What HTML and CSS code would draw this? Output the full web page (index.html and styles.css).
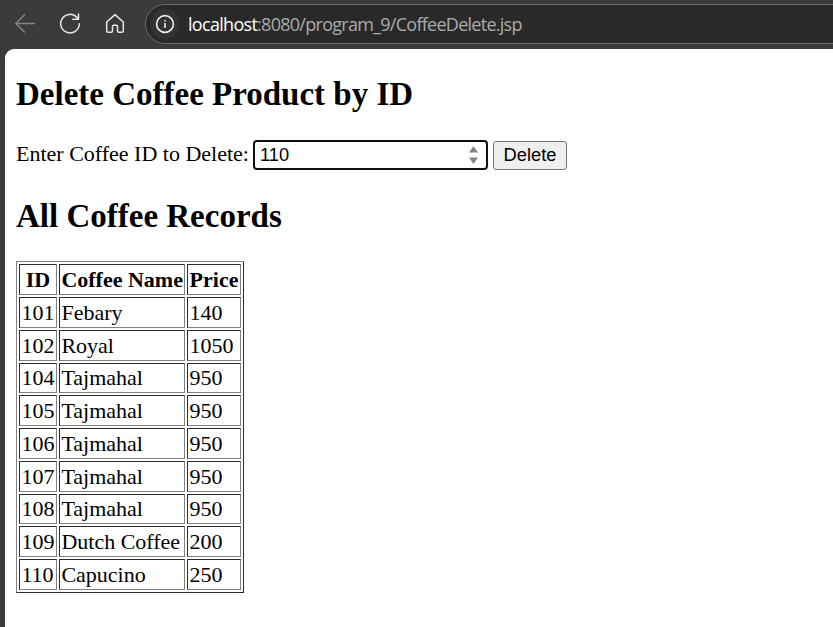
FILE: index.html
```
<!DOCTYPE html>
<html lang="en">
<head>
<meta charset="utf-8">
<title>Delete Coffee Product</title>
<link rel="stylesheet" href="styles.css">
</head>
<body>
<header class="toolbar">
  <svg class="nav-icon back" width="22" height="22" viewBox="0 0 22 22"><path d="M20.5 11.5H1.8M10.5 2.8 1.8 11.5l8.7 8.5"/></svg>
  <svg class="nav-icon reload" width="22" height="22" viewBox="0 0 22 22"><path d="M20.3 11.7A9.3 9.3 0 1 1 17.8 5.3L19.3 7.1M19.5 2.1V7.3H13.8"/></svg>
  <svg class="nav-icon home" width="20" height="22" viewBox="0 0 20 22"><path d="M1.7 10 10 2.6l8.3 7.4v8.9a1.3 1.3 0 0 1-1.3 1.3h-3.2a1.3 1.3 0 0 1-1.3-1.3v-4.4a1.3 1.3 0 0 0-1.3-1.3H8.8a1.3 1.3 0 0 0-1.3 1.3v4.4a1.3 1.3 0 0 1-1.3 1.3H3a1.3 1.3 0 0 1-1.3-1.3z"/></svg>
  <div class="address">
    <span class="site-info"><svg width="20" height="20" viewBox="0 0 20 20"><circle cx="10" cy="10" r="8.4"/><path d="M10 9v5M10 6v1.6"/></svg></span>
    <span class="url"><span class="host">localhost</span><span class="path">:8080/program_9/CoffeeDelete.jsp</span></span>
  </div>
</header>
<main class="page">
  <h2>Delete Coffee Product by ID</h2>
  <form class="delete-form">
    <label for="coffee-id">Enter Coffee ID to Delete:</label>
    <span class="number-field">
      <input id="coffee-id" type="text" inputmode="numeric" value="110">
      <svg class="spinner" width="9" height="18" viewBox="0 0 9 18"><path d="M4.5 0 9 6.5H0zM4.5 18 9 11.5H0z"/></svg>
    </span>
    <button type="button">Delete</button>
  </form>
  <h2>All Coffee Records</h2>
  <table>
    <tr><th>ID</th><th>Coffee Name</th><th>Price</th></tr>
    <tr><td>101</td><td>Febary</td><td>140</td></tr>
    <tr><td>102</td><td>Royal</td><td>1050</td></tr>
    <tr class="tight"><td>104</td><td>Tajmahal</td><td>950</td></tr>
    <tr><td>105</td><td>Tajmahal</td><td>950</td></tr>
    <tr><td>106</td><td>Tajmahal</td><td>950</td></tr>
    <tr><td>107</td><td>Tajmahal</td><td>950</td></tr>
    <tr class="tight"><td>108</td><td>Tajmahal</td><td>950</td></tr>
    <tr><td>109</td><td>Dutch Coffee</td><td>200</td></tr>
    <tr><td>110</td><td>Capucino</td><td>250</td></tr>
  </table>
</main>
</body>
</html>
```
FILE: styles.css
```
* { box-sizing: border-box; }
body {
  margin: 0;
  height: 627px;
  overflow: hidden;
  background: #3b3b3b;
  display: flex;
  flex-direction: column;
}
.toolbar {
  height: 49px;
  flex: none;
  display: flex;
  align-items: flex-start;
  padding: 4px 0 0 14px;
}
.nav-icon {
  flex: none;
  margin-top: 8px;
  fill: none;
  stroke: #e6e6e6;
  stroke-width: 1.5;
  stroke-linecap: round;
  stroke-linejoin: round;
}
.back { stroke: #858585; }
.reload { margin-left: 23px; }
.home { margin-left: 24px; }
.address {
  flex: 1;
  height: 40px;
  margin: 0 -40px 0 20px;
  border: 1px solid #6b6b6b;
  border-radius: 20px;
  background: #292929;
  display: flex;
  align-items: center;
  padding-left: 4px;
}
.site-info {
  width: 30px;
  height: 30px;
  border-radius: 50%;
  background: #333;
  display: flex;
  align-items: center;
  justify-content: center;
}
.site-info svg { fill: none; stroke: #ededed; stroke-width: 1.6; }
.url {
  margin-left: 8px;
  font: 18px "Open Sans", sans-serif;
  white-space: nowrap;
}
.host { color: #fff; letter-spacing: -0.7px; }
.path { color: #ababab; letter-spacing: -0.73px; }
.page {
  flex: 1;
  margin-left: 5px;
  padding: 0 11px;
  background: #fff;
  border-top-left-radius: 9px;
  color: #000;
  font: 22px/30px "Liberation Serif", serif;
}
h2 {
  margin: 0;
  font-size: 33px;
  line-height: 38px;
}
.page h2:first-child { padding-top: 26px; height: 64px; }
.delete-form {
  display: flex;
  height: 30px;
  margin: 27px 0;
}
.delete-form label { width: 237px; white-space: nowrap; line-height: 28px; }
.number-field {
  width: 235px;
  height: 30px;
  border: 2.5px solid #101010;
  border-radius: 4px;
  display: flex;
  align-items: center;
  padding: 0 8px 0 5px;
}
.number-field input {
  flex: 1;
  min-width: 0;
  height: 24px;
  border: 0;
  padding: 0 0 1px;
  outline: 0;
  font: 18.3px "Liberation Sans", sans-serif;
}
.spinner { fill: #858585; }
button {
  width: 74px;
  height: 29px;
  margin: 1px 0 0 5px;
  padding: 0 0 2px;
  border: 1px solid #767676;
  border-radius: 3px;
  background: #efefef;
  color: #000;
  font: 18.3px "Liberation Sans", sans-serif;
}
table {
  margin-top: 26px;
  width: 228px;
  table-layout: fixed;
  border: 1px solid;
  border-color: #808080 #2c2c2c #2c2c2c #808080;
  border-spacing: 2px;
}
th, td {
  height: 31px;
  padding: 0 1.4px;
  border: 1px solid;
  border-color: #2c2c2c #808080 #808080 #2c2c2c;
  line-height: 28px;
  text-align: left;
  white-space: nowrap;
}
td { line-height: 27px; padding-bottom: 1px; }
.tight td { height: 30px; }
th { text-align: center; }
th:nth-child(1) { width: 38px; }
th:nth-child(2) { width: 126px; }
```
